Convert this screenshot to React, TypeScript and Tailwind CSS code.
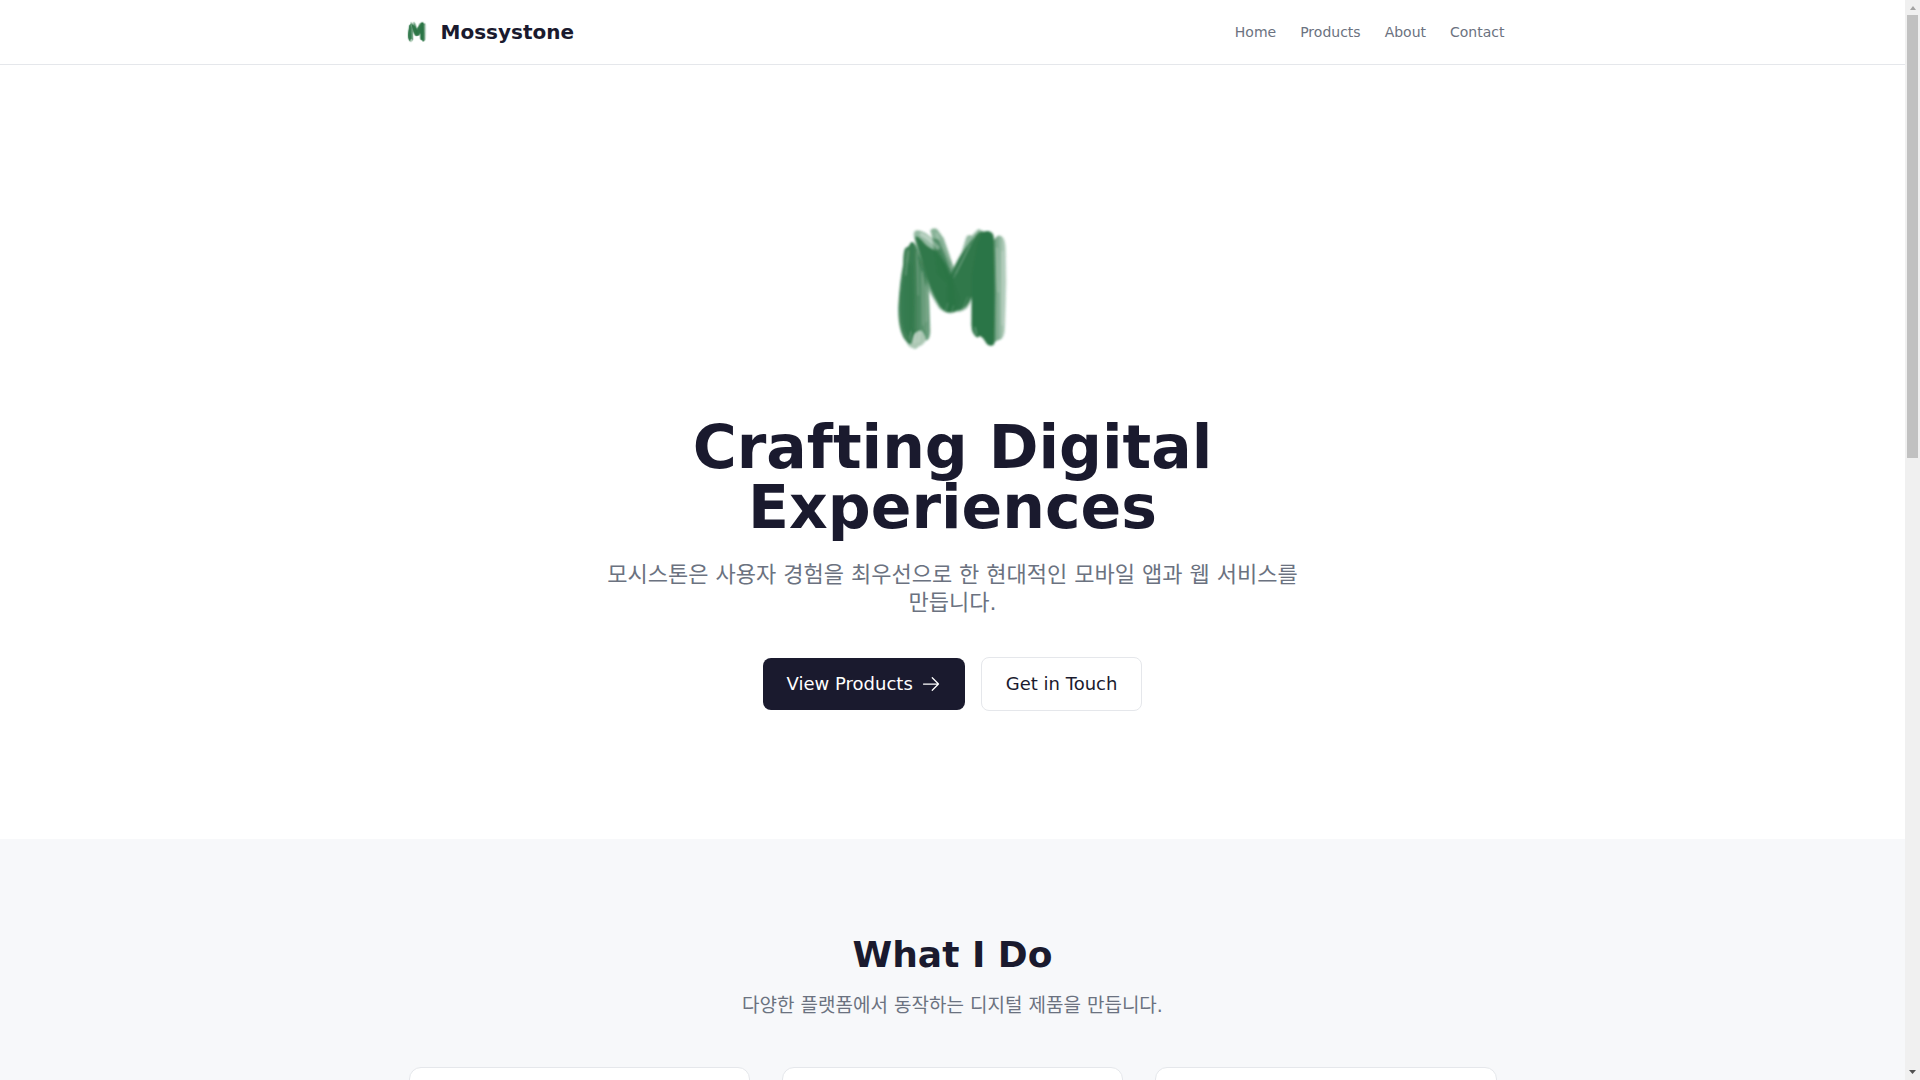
import { HiOutlineArrowRight } from 'react-icons/hi2';

const NAV_LINKS = ['Home', 'Products', 'About', 'Contact'];
const SERVICES = ['Mobile Apps', 'Web Services', 'Digital Design'];

/* Brush-painted M. Soft washes at the edges, dense strokes over them, then bristle streaks. */
function BrushMark({ className }: { className: string }) {
  return (
    <svg viewBox="-70 -66 576 576" className={className} role="img" aria-label="Mossystone">
      <defs>
        <filter id="soft" x="-10%" y="-10%" width="120%" height="120%">
          <feGaussianBlur stdDeviation="2.5" />
        </filter>
        <linearGradient id="leftLeg" x1="0" x2="1" y1="0" y2="0">
          <stop offset="0" stopColor="#2c7546" stopOpacity=".85" />
          <stop offset=".45" stopColor="#2c7546" stopOpacity=".95" />
          <stop offset="1" stopColor="#2c7546" stopOpacity=".65" />
        </linearGradient>
        <linearGradient id="rightEdge" x1="0" x2="1" y1="0" y2="0">
          <stop offset="0" stopColor="#2c7546" stopOpacity=".85" />
          <stop offset="1" stopColor="#2c7546" stopOpacity=".3" />
        </linearGradient>
      </defs>
      <g filter="url(#soft)" fill="#2c7546">
        {/* left leg */}
        <path fill="url(#leftLeg)" d="M76 98Q86 96 90 84Q98 76 106 92L128 150Q146 200 147 260L150 350Q148 376 138 376Q132 350 122 346Q104 346 98 366L92 388Q72 382 62 350Q52 320 54 270Q58 200 68 150Q68 104 76 98Z" />
        <path fill="#31794b" opacity=".7" d="M74 150Q84 130 94 150L100 260L96 350Q84 372 70 344Q58 310 60 250Z" />
        <path opacity=".4" d="M92 352Q106 338 134 348L138 376Q124 394 116 394Q108 406 98 400Q86 398 78 382Z" />
        {/* inner stroke beside the left diagonal */}
        <path opacity=".55" d="M150 46Q158 36 170 42L190 70L220 156L218 210L196 190L160 90Z" />
        <path opacity=".6" d="M156 70L178 74L212 150L212 220L170 180Z" />
        {/* left diagonal */}
        <path opacity=".5" d="M100 58Q102 40 122 48Q150 56 176 100L214 180L240 250L226 292Q200 302 176 280L140 220L112 130Z" />
        <path opacity=".95" d="M104 66Q110 60 124 76Q140 98 168 108L198 150L216 196L226 286Q200 302 178 274Q146 222 130 160Z" />
        {/* right diagonal */}
        <path opacity=".5" d="M258 66Q264 56 274 62L294 42L314 50L310 150L276 240Q268 286 238 290L196 292L196 220L206 180L244 110Z" />
        <path opacity=".95" d="M296 52Q312 46 318 60L300 160L274 244Q260 282 234 286L204 288L204 196L218 166Q250 96 296 52Z" />
        {/* right leg */}
        <path fill="url(#rightEdge)" d="M330 80L342 74Q354 54 366 66Q374 74 376 96L378 200L374 330Q374 376 352 376L334 388Z" />
        <path d="M304 58Q314 44 330 50Q342 54 341 80L344 230L342 386Q334 398 320 388L308 370L298 362L292 368Q274 360 273 330L274 180L290 90Z" />
      </g>
      <g fill="none" stroke="#fff" strokeLinecap="round" filter="url(#soft)">
        <path d="M124 58Q150 72 172 98" strokeWidth="12" opacity=".35" />
        <path d="M168 56L198 120L210 156" strokeWidth="4" opacity=".3" />
        <path d="M110 110L114 240M126 170L128 330M138 210L138 320" strokeWidth="4" opacity=".2" />
        <path d="M84 108L76 180M92 350L88 376M106 356L104 384M118 352L114 380" strokeWidth="4" opacity=".25" />
        <path d="M284 64L226 176M268 90L220 188" strokeWidth="3" opacity=".25" />
        <path d="M196 288L202 264M214 290L220 272M246 282L262 246" strokeWidth="3" opacity=".2" />
        <path d="M350 100L354 230M366 110L366 330M284 338L288 358" strokeWidth="5" opacity=".25" />
      </g>
    </svg>
  );
}

function Header() {
  return (
    <header className="border-b border-[#e5e7eb] bg-white">
      <div className="mx-auto flex h-16 max-w-6xl items-center justify-between px-6">
        <a href="#home" className="flex items-center gap-2">
          <BrushMark className="size-8" />
          <span className="text-xl font-bold">Mossystone</span>
        </a>
        <nav className="flex items-center gap-6">
          {NAV_LINKS.map(label => (
            <a key={label} href={`#${label.toLowerCase()}`} className="text-sm text-[#6b7280]">
              {label}
            </a>
          ))}
        </nav>
      </div>
    </header>
  );
}

function Hero() {
  return (
    <section id="home" className="px-8 py-32">
      <div className="mx-auto flex max-w-3xl flex-col items-center text-center">
        <BrushMark className="mb-8 size-48" />
        <h1 className="mb-6 text-6xl leading-none font-bold">Crafting Digital Experiences</h1>
        <p className="mb-10 max-w-[700px] text-[22px] leading-7 break-keep text-[#6b7280]">
          모시스톤은 사용자 경험을 최우선으로 한 현대적인 모바일 앱과 웹 서비스를 만듭니다.
        </p>
        <div className="flex items-center gap-4">
          <a href="#products" className="flex items-center gap-2 rounded-lg bg-[#1a1a2e] px-6 py-3 text-lg leading-7 text-white">
            View Products
            <HiOutlineArrowRight className="size-5" />
          </a>
          <a href="#contact" className="rounded-lg border border-[#e5e7eb] px-6 py-3 text-lg leading-7">
            Get in Touch
          </a>
        </div>
      </div>
    </section>
  );
}

function Services() {
  return (
    <section id="products" className="bg-[#f7f8fa] px-8 py-24">
      <div className="mx-auto max-w-[1088px]">
        <div className="mb-12 text-center">
          <h2 className="mb-4 text-4xl font-bold">What I Do</h2>
          <p className="text-[19px] leading-7 text-[#6b7280]">다양한 플랫폼에서 동작하는 디지털 제품을 만듭니다.</p>
        </div>
        <div className="grid grid-cols-3 gap-8">
          {SERVICES.map(name => (
            <article key={name} aria-label={name} className="h-64 rounded-xl border border-[#e5e7eb] bg-white" />
          ))}
        </div>
      </div>
    </section>
  );
}

function ScrollTrack() {
  return (
    <div aria-hidden="true" className="flex w-[15px] shrink-0 flex-col items-center bg-[#f0f0f0]">
      <svg viewBox="0 0 15 15" className="size-[15px] shrink-0">
        <path d="M5 10h6L8 6Z" fill="#a3a3a3" />
      </svg>
      <div className="h-[41%] w-[11px] bg-[#c1c1c1]" />
      <svg viewBox="0 0 15 15" className="mt-auto size-[15px] shrink-0">
        <path d="M4 5h7L7.500 9Z" fill="#505050" />
      </svg>
    </div>
  );
}

export default function App() {
  return (
    <div className="flex h-screen overflow-hidden bg-white font-['DejaVu_Sans','Noto_Sans_CJK_KR',sans-serif] text-[#1a1a2e]">
      <main className="min-w-0 flex-1 overflow-hidden">
        <Header />
        <Hero />
        <Services />
      </main>
      <ScrollTrack />
    </div>
  );
}
